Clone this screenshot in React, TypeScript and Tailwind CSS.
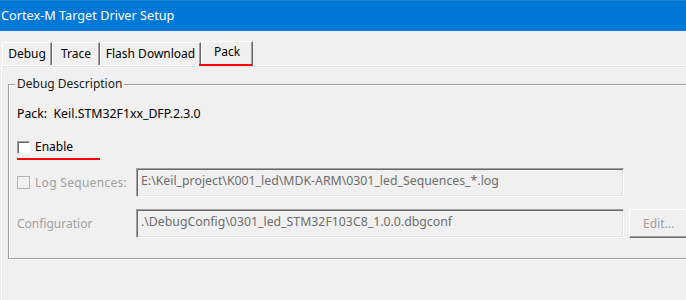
const font = "font-['Noto_Sans',Arial,sans-serif]";

function Tab({ label, width, active }: { label: string; width: string; active?: boolean }) {
  return (
    <div
      className={`relative flex items-start justify-center border-t border-l border-white border-r border-r-[#696969] shadow-[inset_-1px_0_0_#a0a0a0] ${width} ${
        active ? "h-[25px] -mb-[1px] bg-[#f0f0f0] pt-[2px] z-10" : "h-[23px] pt-[3px]"
      }`}
    >
      <span className="text-[12px] leading-[16px] text-black">{label}</span>
      {active && <div className="absolute left-[-3px] right-[0px] bottom-[0px] h-[2px] bg-[#ff0000]" />}
    </div>
  );
}

function Sunken({ text, width }: { text: string; width: string }) {
  return (
    <div
      className={`h-[29px] ${width} border border-t-[#a0a0a0] border-l-[#a0a0a0] border-b-white border-r-white shadow-[inset_1px_1px_0_#696969,inset_-1px_-1px_0_#e3e3e3] pl-[4px] pt-[4px] text-[12.3px] leading-[16px] text-[#6d6d6d] whitespace-nowrap overflow-hidden`}
    >
      {text}
    </div>
  );
}

function Check({ disabled }: { disabled?: boolean }) {
  return (
    <div
      className={`w-[13px] h-[13px] border ${
        disabled
          ? "border-[#b5b5b5] bg-[#f0f0f0]"
          : "border-t-[#a0a0a0] border-l-[#a0a0a0] border-b-white border-r-white bg-white shadow-[inset_1px_1px_0_#696969]"
      }`}
    />
  );
}

export default function App() {
  return (
    <div className={`w-[686px] h-[300px] overflow-hidden bg-[#f0f0f0] ${font}`}>
      <div className="h-[31px] bg-[#0078d7] border-t border-[#1a86dc] flex items-center pl-[1px] text-[12.7px] text-white">
        Cortex-M Target Driver Setup
      </div>

      <div className="h-[34px] flex items-end pl-[2px] pb-[0px]">
        <Tab label="Debug" width="w-[50px]" />
        <Tab label="Trace" width="w-[48px]" />
        <Tab label="Flash Download" width="w-[101px]" />
        <Tab label="Pack" width="w-[52px]" active />
      </div>

      <div className="ml-[1px] h-[235px] border-t border-l border-white shadow-[inset_0_1px_0_#e3e3e3] pt-[18px] pl-[6px]">
        <div className="relative w-[700px] h-[175px] border border-[#a0a0a0] shadow-[inset_1px_1px_0_#fff,1px_1px_0_#fff] pl-[8px] pt-[21px]">
          <span className="absolute -top-[9px] left-[6px] bg-[#f0f0f0] px-[2px] text-[12px] leading-[16px] text-[#1a1a1a]">
            Debug Description
          </span>

          <div className="text-[12.3px] leading-[16px] text-black">Pack:&nbsp; Keil.STM32F1xx_DFP.2.3.0</div>

          <div className="relative mt-[17px] flex items-center gap-[5px] h-[16px] w-[83px]">
            <Check />
            <span className="text-[12px] leading-[16px] text-black">Enable</span>
            <div className="absolute left-0 right-0 top-[19px] h-[2px] bg-[#ff0000]" />
          </div>

          <div className="mt-[13px] flex items-center">
            <div className="flex items-center gap-[5px] w-[119px]">
              <Check disabled />
              <span className="text-[12px] leading-[16px] text-[#a0a0a0] tracking-[0.3px]">Log Sequences:</span>
            </div>
            <Sunken text="E:\Keil_project\K001_led\MDK-ARM\0301_led_Sequences_*.log" width="w-[488px]" />
          </div>

          <div className="mt-[12px] flex items-center">
            <div className="w-[119px] text-[12px] leading-[16px] text-[#a0a0a0]">Configuratior</div>
            <Sunken text=".\DebugConfig\0301_led_STM32F103C8_1.0.0.dbgconf" width="w-[488px]" />
            <div className="ml-[5px] h-[29px] w-[70px] border border-t-white border-l-white border-b-[#696969] border-r-[#696969] shadow-[inset_-1px_-1px_0_#a0a0a0] flex items-center pl-[13px] text-[12px] text-[#a0a0a0]">
              Edit...
            </div>
          </div>
        </div>
      </div>
    </div>
  );
}
